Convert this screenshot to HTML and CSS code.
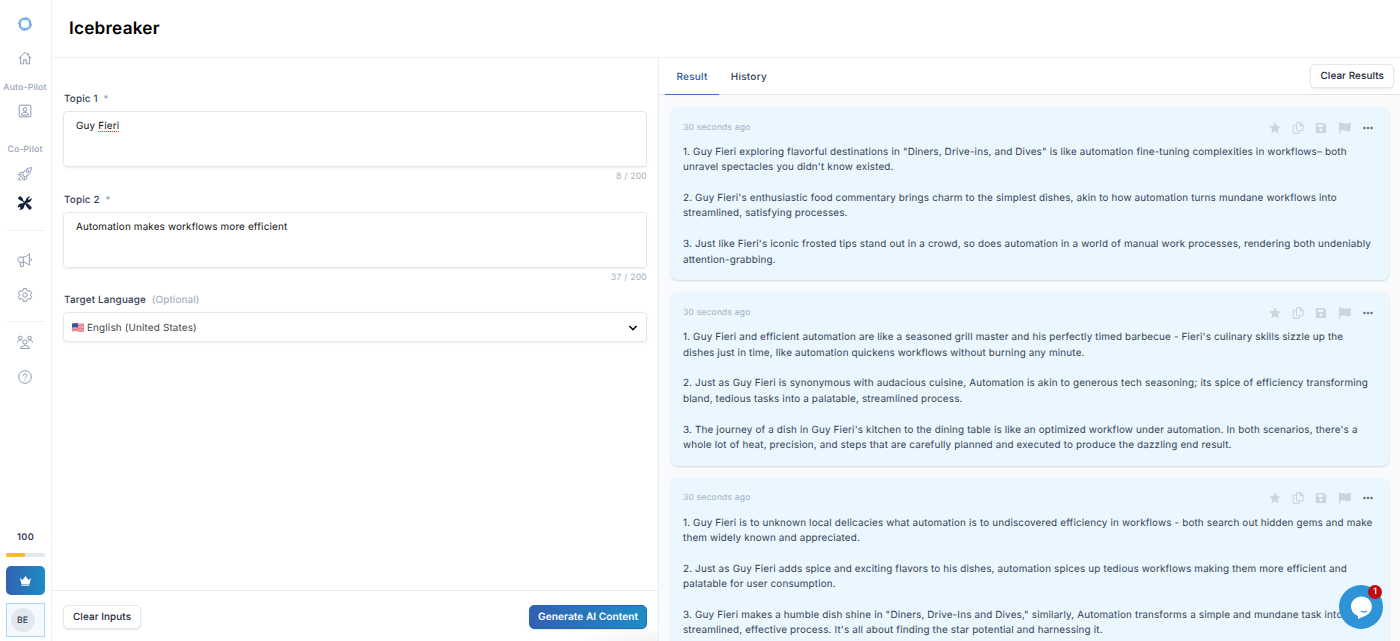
FILE: index.html
```html
<!DOCTYPE html>
<html lang="en">
<head>
    <meta charset="UTF-8">
    <meta name="viewport" content="width=device-width, initial-scale=1.0">
    <title>Icebreaker</title>
    <link rel="stylesheet" href="styles.css">
</head>
<body>
    <!-- Shared icons for the result cards -->
    <svg class="sprite">
        <symbol id="star" viewBox="0 0 20 20"><path d="M10 .5l2.900 6 6.600.9-4.800 4.600 1.200 6.600L10 15.500l-5.900 3.100 1.200-6.600L.5 7.400l6.600-.9z"/></symbol>
        <symbol id="copy" viewBox="0 0 20 20"><path d="M9 1h5l4.500 4.500V13a1.500 1.500 0 0 1-1.500 1.500H9A1.500 1.500 0 0 1 7.500 13V2.500A1.500 1.500 0 0 1 9 1zM13.500 1v5h5M7.500 5.500h-4A1.500 1.500 0 0 0 2 7v10.500A1.500 1.500 0 0 0 3.500 19H11a1.500 1.500 0 0 0 1.500-1.500v-3" fill="none" stroke="currentColor" stroke-width="1.800"/></symbol>
        <symbol id="save" viewBox="0 0 20 20"><path fill-rule="evenodd" d="M3 1.500h11.500l4 4V17a1.500 1.500 0 0 1-1.500 1.500H3A1.500 1.500 0 0 1 1.500 17V3A1.500 1.500 0 0 1 3 1.500zM4.500 4v4.500h9V4zM10 10.500a2.600 2.600 0 1 0 0 5.200 2.600 2.600 0 0 0 0-5.200z"/></symbol>
        <symbol id="flag" viewBox="0 0 20 20"><path d="M0 0h2v2.500c5-2.500 7 1 11 .5 2-.3 4-1 6.500-2v13c-5 2.500-8 1-10 .3-2.500-.7-5-.3-7.500.4V20H0z"/></symbol>
        <symbol id="dots" viewBox="0 0 20 20"><circle cx="4" cy="10" r="2.200"/><circle cx="10" cy="10" r="2.200"/><circle cx="16" cy="10" r="2.200"/></symbol>
    </svg>

    <div class="app">
        <nav class="sidebar">
            <svg class="icon logo" viewBox="0 0 24 24">
                <circle cx="12" cy="12" r="8"/>
                <path d="M5 5.500C9 1 15 1.500 19 5M12 1.200c6-.5 10.500 4.500 9.500 10M18.500 5c4.500 4 4 10 .5 14M22.800 12c.5 6-4.500 10.500-10 9.500M19 18.500c-4 4.500-10 4-14 .5M12 22.800c-6 .5-10.500-4.500-9.500-10M5.500 19C1 15 1.500 9 5 5M1.200 12c-.5-6 4.500-10.500 10-9.500"/>
            </svg>
            <svg class="icon home" viewBox="0 0 24 24"><path d="M1.500 12.500L12 2.500l10.500 10M4.500 10v12h5.300v-7h4.400v7h5.300V10M17.500 3v4"/></svg>
            <span class="nav-label first">Auto-Pilot</span>
            <svg class="icon contact" viewBox="0 0 24 24"><rect x="2" y="2" width="20" height="20" rx="1.500"/><circle cx="12" cy="9.500" r="3.200"/><path d="M6 19c.3-6.500 11.700-6.500 12 0z"/></svg>
            <span class="nav-label second">Co-Pilot</span>
            <svg class="icon rocket" viewBox="0 0 24 24"><path d="M8 13c2-6 6-11 15-12C23 10 17 15 11 17zM9 9H4l-3 5 6-1M15 15v5l-5 3 1-6"/><circle cx="16.500" cy="7.500" r="2.300"/><path d="M6 16c-4 0-4 3-4.500 6.500C5 22 8 22 8 18z"/></svg>
            <svg class="icon tools" viewBox="0 0 24 24">
                <path class="wrench" d="M4 20L17 7"/>
                <path class="solid" d="M14 11c-2-5 2-11 7-10L17 5.200l1.800 1.800L23 3.500c1.500 4-3 9-9 7.500zM1 2l3-2 5 5.500-3 3L0 4.500z"/>
                <path class="driver" d="M5.500 5.500L13 13"/>
                <path class="solid" d="M12.500 15l3-3 7.500 7c1.500 2-1.500 5.500-4 4zM10.500 16c1 5-3.500 9-8.500 7l3.500-3.500-1.500-2L0 20c-1-5 3.500-8.500 8-7z"/>
            </svg>
            <hr class="line line-one">
            <svg class="icon megaphone" viewBox="0 0 24 24"><path d="M19.500 1v20C16 17 12 16 9 16H3c-4 0-4-9 0-9h6c4 0 7-1.500 10.500-6zM9 7v9M4 16v7h5v-7M22.500 9v5"/></svg>
            <svg class="icon gear" viewBox="0 0 24 24"><path d="M9.500 1h5l.8 3.500 2.200 1.200 3.400-1 2.500 4.300L21 12l2.400 3-2.500 4.300-3.400-1-2.200 1.200-.8 3.500h-5l-.8-3.500-2.200-1.200-3.400 1L.6 15 3 12 .6 9l2.500-4.300 3.400 1 2.200-1.200z"/><circle cx="12" cy="12" r="3.800"/></svg>
            <hr class="line line-two">
            <svg class="icon people" viewBox="0 0 24 24"><circle cx="12" cy="12" r="3.700"/><path d="M4.500 23c.5-6.500 14.500-6.500 15 0z"/><circle cx="4" cy="5" r="3"/><circle cx="20" cy="5" r="3"/><path d="M-1 13c.5-4 3-5 7-4M25 13c-.5-4-3-5-7-4"/></svg>
            <svg class="icon help" viewBox="0 0 24 24"><circle cx="12" cy="12" r="10.800"/><path d="M8.800 9.800c0-4.500 6.500-4 6.500-.5 0 2.500-3.300 2.200-3.300 5M12 16.500v2"/></svg>

            <div class="account">
                <span class="credits">100</span>
                <div class="meter"><div class="meter-fill"></div></div>
                <div class="upgrade">
                    <svg viewBox="0 0 24 24"><path d="M1 6l5 4 6-8 6 8 5-4-3 12H4zM4 19h16v2.500H4z"/></svg>
                </div>
                <div class="user"><span class="avatar">BE</span></div>
            </div>
        </nav>

        <div class="page">
            <header class="header"><h1>Icebreaker</h1></header>
            <main class="content">
                <section class="inputs">
                    <form class="form">
                        <div class="field">
                            <label>Topic 1 <span class="hint">*</span></label>
                            <div class="text-box">Guy <span class="misspelled">Fieri</span></div>
                            <span class="count">8 / 200</span>
                        </div>
                        <div class="field">
                            <label>Topic 2 <span class="hint">*</span></label>
                            <div class="text-box">Automation makes workflows more efficient</div>
                            <span class="count">37 / 200</span>
                        </div>
                        <div class="field">
                            <label>Target Language <span class="hint">(Optional)</span></label>
                            <div class="select">
                                <svg class="us-flag" viewBox="0 0 12 9">
                                    <path fill="#f3dfe3" d="M0 .8Q3-.2 6 .6t6 0v7.600q-3 .8-6 0t-6 .2z"/>
                                    <path stroke="#e2485c" stroke-width=".75" fill="none" d="M0 1q3-1 6-.2t6 0M0 2.400q3-.8 6 0t6 0M0 3.900q3-.8 6 0t6 0M0 5.300q3-.8 6 0t6 0M0 6.700q3-.8 6 0t6 0M0 8q3-.8 6 0t6 0"/>
                                    <path fill="#275ba5" d="M0 .8Q3-.2 6 .6v4q-3-.8-6 0z"/>
                                </svg>
                                <span>English (United States)</span>
                                <svg class="chevron" viewBox="0 0 10 10"><path d="M1.500 3l3.500 3.700L8.500 3"/></svg>
                            </div>
                        </div>
                    </form>
                    <footer class="actions">
                        <button class="btn">Clear Inputs</button>
                        <button class="btn primary">Generate AI Content</button>
                    </footer>
                </section>

                <section class="results">
                    <div class="tabs">
                        <span class="tab active">Result</span>
                        <span class="tab">History</span>
                        <button class="btn clear-results">Clear Results</button>
                    </div>
                    <div class="cards">
                        <article class="card">
                            <div class="card-top">
                                <span>30 seconds ago</span>
                                <div class="card-icons"><svg><use href="#star"/></svg><svg><use href="#copy"/></svg><svg><use href="#save"/></svg><svg><use href="#flag"/></svg><svg class="more"><use href="#dots"/></svg></div>
                            </div>
                            <p>1. Guy Fieri exploring flavorful destinations in "Diners, Drive-ins, and Dives" is like automation fine-tuning complexities in workflows– both<br>unravel spectacles you didn't know existed.</p>
                            <p>2. Guy Fieri's enthusiastic food commentary brings charm to the simplest dishes, akin to how automation turns mundane workflows into<br>streamlined, satisfying processes.</p>
                            <p>3. Just like Fieri's iconic frosted tips stand out in a crowd, so does automation in a world of manual work processes, rendering both undeniably<br>attention-grabbing.</p>
                        </article>
                        <article class="card">
                            <div class="card-top">
                                <span>30 seconds ago</span>
                                <div class="card-icons"><svg><use href="#star"/></svg><svg><use href="#copy"/></svg><svg><use href="#save"/></svg><svg><use href="#flag"/></svg><svg class="more"><use href="#dots"/></svg></div>
                            </div>
                            <p>1. Guy Fieri and efficient automation are like a seasoned grill master and his perfectly timed barbecue - Fieri's culinary skills sizzle up the<br>dishes just in time, like automation quickens workflows without burning any minute.</p>
                            <p>2. Just as Guy Fieri is synonymous with audacious cuisine, Automation is akin to generous tech seasoning; its spice of efficiency transforming<br>bland, tedious tasks into a palatable, streamlined process.</p>
                            <p>3. The journey of a dish in Guy Fieri's kitchen to the dining table is like an optimized workflow under automation. In both scenarios, there's a<br>whole lot of heat, precision, and steps that are carefully planned and executed to produce the dazzling end result.</p>
                        </article>
                        <article class="card">
                            <div class="card-top">
                                <span>30 seconds ago</span>
                                <div class="card-icons"><svg><use href="#star"/></svg><svg><use href="#copy"/></svg><svg><use href="#save"/></svg><svg><use href="#flag"/></svg><svg class="more"><use href="#dots"/></svg></div>
                            </div>
                            <p>1. Guy Fieri is to unknown local delicacies what automation is to undiscovered efficiency in workflows - both search out hidden gems and make<br>them widely known and appreciated.</p>
                            <p>2. Just as Guy Fieri adds spice and exciting flavors to his dishes, automation spices up tedious workflows making them more efficient and<br>palatable for user consumption.</p>
                            <p>3. Guy Fieri makes a humble dish shine in "Diners, Drive-Ins and Dives," similarly, Automation transforms a simple and mundane task into<br>streamlined, effective process. It's all about finding the star potential and harnessing it.</p>
                        </article>
                    </div>
                </section>
            </main>
        </div>
    </div>

    <!-- Chat launcher -->
    <div class="chat">
        <svg viewBox="0 0 44 44"><path fill="#fff" d="M22 11.500a10.500 10 0 0 1 4.500 19.200L19 34v-3A10.300 10 0 0 1 22 11.500z"/><path d="M22 26q3 2 6 0" fill="none" stroke="#2f93d8" stroke-width="1.500"/></svg>
        <span class="chat-badge">1</span>
    </div>
</body>
</html>
```
FILE: styles.css
```css
* {
    box-sizing: border-box;
}

body {
    margin: 0;
    overflow: hidden;
    font-family: Inter, "Liberation Sans", sans-serif;
    font-size: 9.9px;
    letter-spacing: 0.16px;
    text-rendering: geometricPrecision;
    color: #334155;
    background: #fff;
}

.sprite {
    display: none;
}

.app {
    display: flex;
    height: 100vh;
}

/* Sidebar */
.sidebar {
    width: 52px;
    flex-shrink: 0;
    display: flex;
    flex-direction: column;
    align-items: center;
    padding: 17px 1px 4px 0;
    border-right: 1px solid #eef1f7;
}

.icon {
    width: 14px;
    height: 14px;
    margin-right: 1px;
    flex-shrink: 0;
    overflow: visible;
    fill: none;
    stroke: #8492aa;
    stroke-width: 1.6;
}

.logo {
    stroke: #3e8ddd;
    stroke-width: 1.3;
}

.home {
    margin-top: 20px;
}

.nav-label {
    font-size: 8.7px;
    line-height: 12px;
    font-weight: 500;
    color: #94a3b8;
    letter-spacing: 0.16px;
    white-space: nowrap;
}

.nav-label.first {
    margin-top: 17px;
}

.nav-label.second {
    margin-top: 26px;
}

.contact {
    margin-top: 10px;
}

.rocket {
    margin-top: 11px;
}

.tools {
    margin-top: 15px;
    stroke: #0f1f3d;
}

.tools .wrench {
    stroke-width: 4.5;
}

.tools .driver {
    stroke-width: 2;
}

.tools .solid {
    fill: #0f1f3d;
    stroke: none;
}

.line {
    width: 39px;
    height: 1px;
    margin: 20px 0 0;
    border: none;
    background: #eef1f6;
    flex-shrink: 0;
}

.line-two {
    margin-top: 19px;
}

.megaphone {
    margin-top: 22px;
}

.gear {
    margin-top: 21px;
}

.people {
    margin-top: 13px;
}

.help {
    margin-top: 21px;
}

.account {
    width: 39px;
    margin-top: auto;
    display: flex;
    flex-direction: column;
    align-items: center;
}

.credits {
    font-size: 9.2px;
    line-height: 14px;
    font-weight: 600;
    letter-spacing: 0.4px;
    padding-left: 1px;
}

.meter {
    width: 39px;
    height: 4px;
    margin-top: 8px;
    border-radius: 1px;
    background: #e2e8f0;
}

.meter-fill {
    width: 50%;
    height: 4px;
    border-radius: 1px;
    background: #fbb92c;
}

.upgrade {
    width: 39px;
    height: 29px;
    margin-top: 9px;
    display: flex;
    align-items: center;
    justify-content: center;
    border-radius: 5px;
    background: linear-gradient(90deg, #3261b1, #1e8cc4);
}

.upgrade svg {
    width: 13px;
    height: 12px;
    fill: #fff;
}

.user {
    width: 39px;
    height: 34px;
    margin-top: 8px;
    padding-left: 4px;
    display: flex;
    align-items: center;
    border: 1px solid #a9d8f8;
    background: #f6fafe;
}

.avatar {
    width: 24px;
    height: 24px;
    padding-top: 1px;
    border-radius: 50%;
    background: #e2e8f0;
    font-size: 8.8px;
    font-weight: 500;
    line-height: 24px;
    text-align: center;
    letter-spacing: 0;
}

/* Page */
.page {
    flex: 1;
    min-width: 0;
    display: flex;
    flex-direction: column;
}

.header {
    height: 58px;
    flex-shrink: 0;
    padding: 17px 17px 0;
    border-bottom: 1px solid #eceff6;
}

.header h1 {
    margin: 0;
    font-size: 17.2px;
    line-height: 24px;
    font-weight: 600;
    letter-spacing: 0.2px;
    color: #000;
}

.content {
    flex: 1;
    min-height: 0;
    display: grid;
    grid-template-columns: 607px 1fr;
}

.inputs {
    display: flex;
    flex-direction: column;
    border-right: 1px solid #e8edf5;
}

.form {
    flex: 1;
    padding: 34px 11px 0;
}

.field {
    display: flex;
    flex-direction: column;
    height: 100.6px;
}

.field label {
    line-height: 15px;
    font-weight: 500;
    padding-left: 1px;
}

.hint {
    margin-left: 3px;
    font-weight: 400;
    color: #94a3b8;
}

.text-box {
    height: 56px;
    margin-top: 4px;
    padding: 6px 12px;
    border: 1px solid #e2e8f0;
    border-radius: 4px;
    box-shadow: 0 1px 2px rgba(15, 23, 42, 0.08);
    line-height: 16px;
    color: #111;
}

.misspelled {
    background: repeating-linear-gradient(90deg, #ff3b30 0 1px, #ffd0cc 1px 2px) 0 100% / 100% 1px no-repeat;
}

.count {
    margin-top: 4px;
    line-height: 12px;
    font-size: 8.7px;
    letter-spacing: 0.2px;
    text-align: right;
    color: #a3b0c3;
}

.select {
    height: 30px;
    margin-top: 4px;
    padding: 1px 8px 0;
    display: flex;
    align-items: center;
    border: 1px solid #e2e8f0;
    border-radius: 4px;
    box-shadow: 0 1px 2px rgba(15, 23, 42, 0.08);
    color: #444;
}

.us-flag {
    width: 12px;
    height: 9px;
    margin-right: 3px;
}

.chevron {
    width: 10px;
    height: 10px;
    margin-left: auto;
    fill: none;
    stroke: #000;
    stroke-width: 1.5;
}

.actions {
    height: 51px;
    padding: 2px 11px 0;
    display: flex;
    align-items: center;
    justify-content: space-between;
    border-top: 1px solid #e8ebf0;
    background: radial-gradient(ellipse 90px 14px at 100% 100%, #f1f2f4, transparent);
}

.btn {
    height: 24px;
    padding: 0 9px;
    border: 1px solid #e2e8f0;
    border-radius: 5px;
    background: #fff;
    box-shadow: 0 1px 2px rgba(15, 23, 42, 0.1);
    font-family: inherit;
    font-size: 9.9px;
    font-weight: 500;
    letter-spacing: 0.1px;
    text-rendering: inherit;
    color: #1e293b;
    white-space: nowrap;
}

.btn.primary {
    border: 1px solid #1f69b5;
    background: linear-gradient(90deg, #3261b1, #1e8cc4);
    color: #fff;
    font-size: 10.2px;
    font-weight: 600;
    letter-spacing: 0;
    padding: 0 8px;
}

/* Results */
.results {
    min-width: 0;
    display: flex;
    flex-direction: column;
    background: #f8fafc;
    overflow: hidden;
}

.tabs {
    height: 37px;
    flex-shrink: 0;
    padding: 0 6px;
    display: flex;
    align-items: stretch;
    background: #fff;
    border-bottom: 1px solid #dfe7f1;
}

.tab {
    padding: 1px 11.5px 0;
    line-height: 37px;
    font-size: 10px;
    font-weight: 500;
    letter-spacing: 0.25px;
    margin-bottom: -1px;
}

.tab.active {
    border-bottom: 1.5px solid #3f72ba;
    color: #2458a6;
}

.clear-results {
    margin: 6px 0 0 auto;
}

.cards {
    padding: 12px 11px 0 12px;
}

.card {
    height: 173.4px;
    margin-bottom: 12px;
    padding: 13px 12px 0;
    border-radius: 7px;
    background: #eaf7ff;
    box-shadow: 0 1px 2px rgba(15, 23, 42, 0.15);
}

.card-top {
    height: 15px;
    display: flex;
    align-items: center;
    justify-content: space-between;
    margin-bottom: 10px;
    font-size: 8.6px;
    color: #a3b1c4;
}

.card-icons {
    display: flex;
    gap: 11.3px;
    margin-right: 3px;
}

.card-icons svg {
    width: 12px;
    height: 12px;
    fill: #cbd5e1;
    color: #cbd5e1;
}

.card-icons .more {
    fill: #64748b;
}

.card p {
    margin: 0 0 15.36px;
    line-height: 15.36px;
    white-space: nowrap;
}

/* Chat */
.chat {
    position: fixed;
    right: 17px;
    bottom: 12px;
    width: 44px;
    height: 44px;
    border-radius: 50%;
    background: #2f93d8;
}

.chat-badge {
    position: absolute;
    top: 0;
    right: 1px;
    width: 14px;
    height: 14px;
    border-radius: 50%;
    background: #c00d12;
    color: #fff;
    font-size: 8.5px;
    font-weight: 600;
    line-height: 14px;
    text-align: center;
    letter-spacing: 0;
}
```
